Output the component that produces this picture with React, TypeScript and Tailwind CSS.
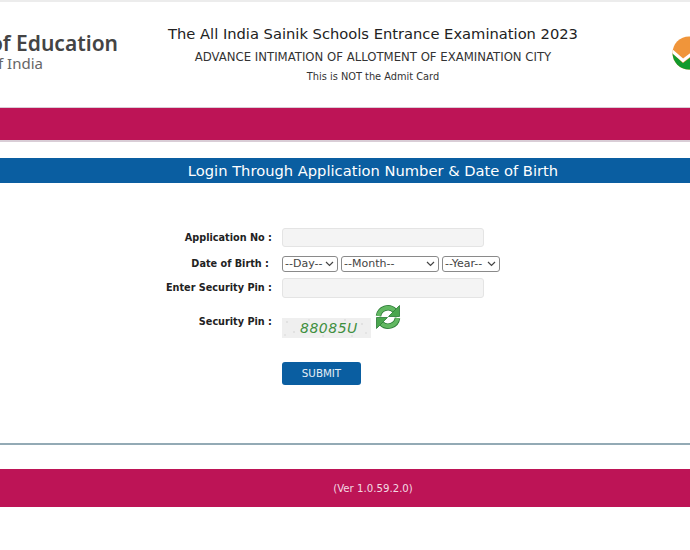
export default function App() {
  const font = "font-['DejaVu_Sans','Liberation_Sans',sans-serif]";
  return (
    <div className={`w-[690px] h-[550px] overflow-hidden bg-white text-[#222] ${font}`}>
      <div className="h-[2px] bg-[#ececec]" />
      <header className="h-[105px] flex">
        <div className="w-[118px] shrink-0 flex flex-col items-end whitespace-nowrap pt-[29px] font-['Noto_Sans',sans-serif] text-[#444]">
          <div className="text-[21px] leading-[25px] font-semibold">of Education</div>
          <div className="text-[15px] leading-[15px] text-[#666] w-[118px] text-left">
            <span className="-ml-[2px] inline-block">f India</span>
          </div>
        </div>
        <div className="w-[510px] shrink-0 flex flex-col items-center pt-[22px] whitespace-nowrap">
          <div className="text-[14.7px] leading-[20px] text-[#222]">The All India Sainik Schools Entrance Examination 2023</div>
          <div className="text-[11.7px] leading-[16px] mt-[5px] text-[#333]">ADVANCE INTIMATION OF ALLOTMENT OF EXAMINATION CITY</div>
          <div className="text-[9.8px] leading-[14px] mt-[5px] text-[#333]">This is NOT the Admit Card</div>
        </div>
        <div className="ml-[44px] pt-[34px]">
          <svg width="34" height="34" viewBox="0 0 34 34" className="block">
            <defs>
              <clipPath id="logoDisc"><circle cx="17" cy="17" r="16.5" /></clipPath>
            </defs>
            <g clipPath="url(#logoDisc)">
              <rect width="34" height="34" fill="#f0953a" />
              <path d="M0 17 L11 27 L34 10 V34 H0 Z" fill="#129a2c" />
              <path d="M0 15 L11 24.500 L34 7" fill="none" stroke="#fff" strokeWidth="3" />
            </g>
          </svg>
        </div>
      </header>
      <div className="h-[35px] bg-[#bd1456] border-t border-b-2 border-[#d9cdd6]" />
      <div className="mt-[16px] h-[25px] bg-[#0a5ea1] text-white text-center text-[14.7px] leading-[26px] pl-[56px]">
        Login Through Application Number &amp; Date of Birth
      </div>
      <form className="mt-[45px] grid grid-cols-[272px_1fr] gap-x-[10px] items-center text-[9.7px] text-[#222]">
        <label className="font-bold text-right leading-[19px]">Application No :</label>
        <div className="w-[202px] h-[19px] bg-[#f4f4f4] border border-[#e4e4e4] rounded-[3px]" />
        <label className="font-bold text-right pr-[3px] mt-[8px] leading-[18px]">Date of Birth :</label>
        <div className="flex gap-[3px] mt-[8px] text-[11px] text-[#444]">
          <Sel w="w-[56px]" label="--Day--" />
          <Sel w="w-[98px]" label="--Month--" />
          <Sel w="w-[58px]" label="--Year--" />
        </div>
        <label className="font-bold text-right mt-[5px] leading-[20px]">Enter Security Pin :</label>
        <div className="w-[202px] h-[20px] mt-[5px] bg-[#f4f4f4] border border-[#e4e4e4] rounded-[3px]" />
        <label className="font-bold text-right self-start mt-[17px] leading-[14px]">Security Pin :</label>
        <div className="flex items-start mt-[6px]">
          <div className="relative mt-[14px] w-[89px] h-[20px] bg-[#efefef] text-[#3f8f3f] italic text-[14px] leading-[21px] tracking-[0.5px] pl-[18px]">
            88085U
            <svg width="89" height="20" viewBox="0 0 89 20" className="absolute inset-0">
              <g fill="#cfcfcf">
                <circle cx="5" cy="4" r="0.8" /><circle cx="12" cy="14" r="0.8" /><circle cx="27" cy="2" r="0.7" />
                <circle cx="41" cy="18" r="0.7" /><circle cx="63" cy="2" r="0.8" /><circle cx="80" cy="6" r="0.8" />
                <circle cx="84" cy="15" r="0.7" /><circle cx="70" cy="18" r="0.7" /><circle cx="3" cy="17" r="0.7" />
              </g>
            </svg>
          </div>
          <svg width="26" height="26" viewBox="0 0 26 26" className="ml-[4px]">
            <g fill="none" strokeLinecap="butt">
              <path d="M3.500 12A9.500 9.500 0 0 1 19.500 6.500" stroke="#2a7a35" strokeWidth="5.500" />
              <path d="M22.500 14A9.500 9.500 0 0 1 6.500 19.500" stroke="#2a7a35" strokeWidth="5.500" />
              <path d="M3.500 12A9.500 9.500 0 0 1 19.500 6.500" stroke="#62b862" strokeWidth="4" />
              <path d="M22.500 14A9.500 9.500 0 0 1 6.500 19.500" stroke="#62b862" strokeWidth="4" />
            </g>
            <path d="M24.500 1.500V12.500H13.500Z" fill="#4aa64e" stroke="#2a7a35" strokeWidth="0.8" />
            <path d="M1.500 24.500V13.500H12.500Z" fill="#4aa64e" stroke="#2a7a35" strokeWidth="0.8" />
          </svg>
        </div>
        <div />
        <button type="button" className="mt-[24px] w-[79px] h-[23px] bg-[#0a5ea1] text-white/90 rounded-[3px] text-[10.3px] text-center">SUBMIT</button>
      </form>
      <div className="mt-[58px] h-[2px] bg-[#93aab5]" />
      <footer className="mt-[24px] h-[38px] bg-[#bd1456] text-[#f3d9e3] text-center text-[10.2px] leading-[39px] pl-[56px]">(Ver 1.0.59.2.0)</footer>
    </div>
  );
}

function Sel({ w, label }: { w: string; label: string }) {
  return (
    <div className={`${w} h-[16px] border border-[#8a8a8a] rounded-[3px] flex items-center justify-between pl-[2px] pr-[3px] leading-[14px] bg-white`}>
      <span>{label}</span>
      <svg width="9" height="6" viewBox="0 0 9 6"><path d="M1 1l3.500 3.500L8 1" fill="none" stroke="#444" strokeWidth="1.200" /></svg>
    </div>
  );
}
